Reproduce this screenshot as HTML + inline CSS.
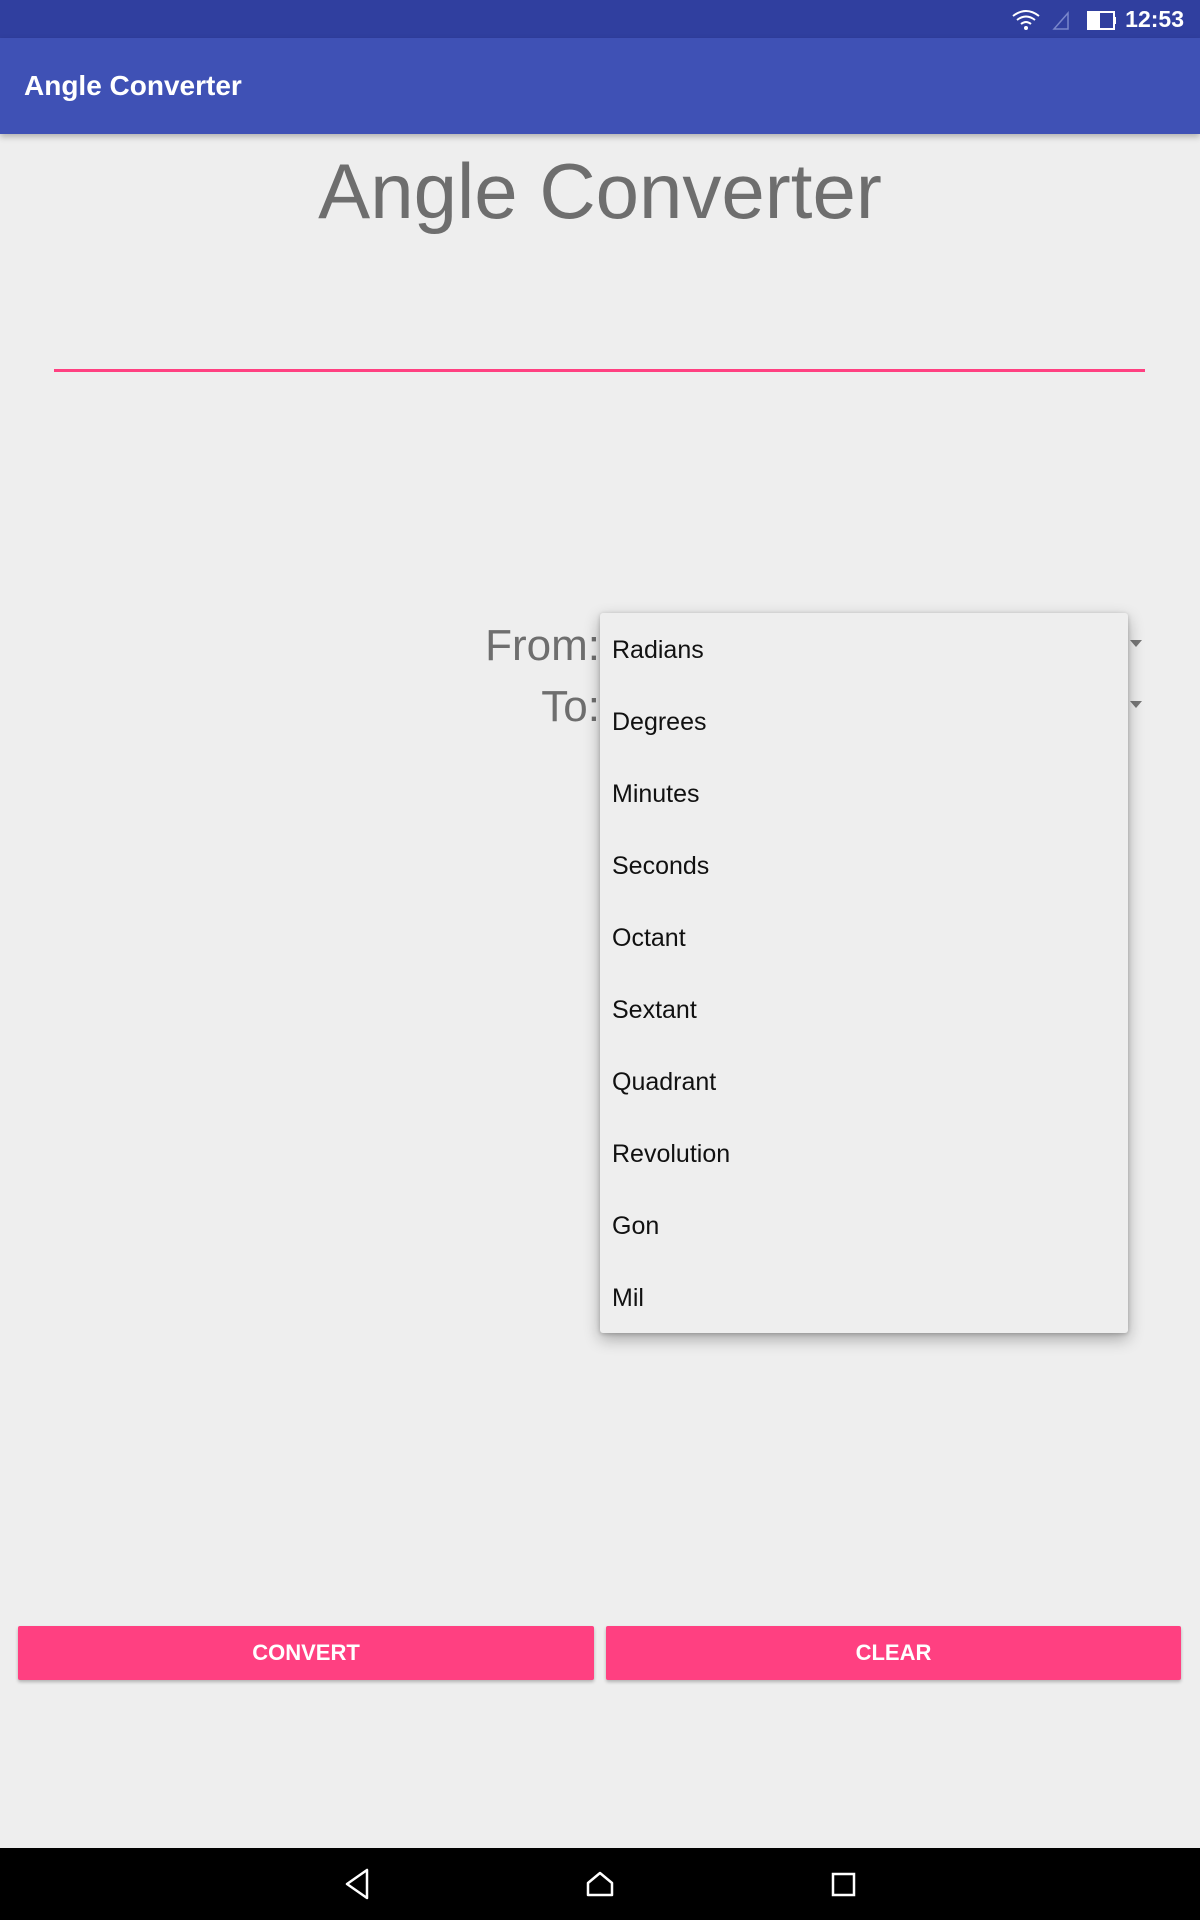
<!DOCTYPE html>
<html><head><meta charset="utf-8"><style>
*{margin:0;padding:0;box-sizing:border-box}
body{width:1200px;height:1920px;background:#eeeeee;position:relative;overflow:hidden;font-family:"Liberation Sans",sans-serif}
.a{position:absolute;line-height:1;white-space:nowrap}
.item{position:absolute;left:612px;font-size:25px;color:#111;line-height:1}
.btn{position:absolute;top:1626px;height:54px;background:#ff4081;color:#fff;font-size:22px;font-weight:bold;display:flex;align-items:center;justify-content:center;border-radius:2px;box-shadow:0 2px 3px rgba(0,0,0,.25)}
</style></head><body>
<div class="a" style="left:0;top:0;width:1200px;height:38px;background:#303f9f"></div>
<div class="a" style="left:0;top:38px;width:1200px;height:96px;background:#3f51b5;box-shadow:0 3px 6px rgba(0,0,0,.25)"></div>
<div class="a" style="left:24px;top:72px;font-size:28px;color:#fff;font-weight:bold;letter-spacing:0">Angle Converter</div>
<svg class="a" style="left:1010px;top:6px" width="170" height="26" viewBox="0 0 170 26">
<path d="M3 10 Q16 0 29 10 M7 14 Q16 7 25 14 M11 18 Q16 14 21 18" stroke="#fff" stroke-width="2" fill="none"/>
<circle cx="16" cy="22" r="2" fill="#fff"/>
<path d="M44 23 L58 23 L58 7 Z" stroke="#7986cb" stroke-width="1.5" fill="none"/>
<rect x="78" y="6" width="26" height="17" stroke="#fff" stroke-width="2" fill="none"/>
<rect x="78" y="6" width="12" height="17" fill="#fff"/>
<rect x="104" y="11" width="2" height="7" fill="#fff"/>
</svg>
<div class="a" style="right:16px;top:8px;font-size:23px;color:#fff;font-weight:bold">12:53</div>
<div class="a" style="left:0;width:1200px;text-align:center;top:152px;font-size:78px;color:#6e6e6e;letter-spacing:0">Angle Converter</div>
<div class="a" style="left:54px;top:369px;width:1091px;height:3px;background:#ff4081"></div>
<div class="a" style="right:600px;top:624px;font-size:44px;color:#6e6e6e">From:</div>
<div class="a" style="right:600px;top:685px;font-size:44px;color:#6e6e6e">To:</div>
<svg class="a" style="left:1128px;top:638px" width="16" height="80"><path d="M2 2 L14 2 L8 9Z M2 63 L14 63 L8 70Z" fill="#777"/></svg>
<div class="a" style="left:600px;top:613px;width:528px;height:720px;background:#eeeeee;border-radius:3px;box-shadow:0 6px 16px rgba(0,0,0,.3),0 1px 4px rgba(0,0,0,.2)"></div>
<div class="item" style="top:638px">Radians</div>
<div class="item" style="top:710px">Degrees</div>
<div class="item" style="top:782px">Minutes</div>
<div class="item" style="top:854px">Seconds</div>
<div class="item" style="top:926px">Octant</div>
<div class="item" style="top:998px">Sextant</div>
<div class="item" style="top:1070px">Quadrant</div>
<div class="item" style="top:1142px">Revolution</div>
<div class="item" style="top:1214px">Gon</div>
<div class="item" style="top:1286px">Mil</div>
<div class="btn" style="left:18px;width:576px">CONVERT</div>
<div class="btn" style="left:606px;width:575px">CLEAR</div>
<div class="a" style="left:0;top:1848px;width:1200px;height:72px;background:#000"></div>
<svg class="a" style="left:0;top:1848px" width="1200" height="72">
<path d="M367 22 L367 50 L347 36 Z" stroke="#fff" stroke-width="2.5" fill="none" stroke-linejoin="round"/>
<path d="M588 47 L588 35 L600 25 L612 35 L612 47 Z" stroke="#fff" stroke-width="2.5" fill="none" stroke-linejoin="round"/>
<rect x="833" y="26" width="21" height="21" stroke="#fff" stroke-width="2.5" fill="none"/>
</svg>
</body></html>
